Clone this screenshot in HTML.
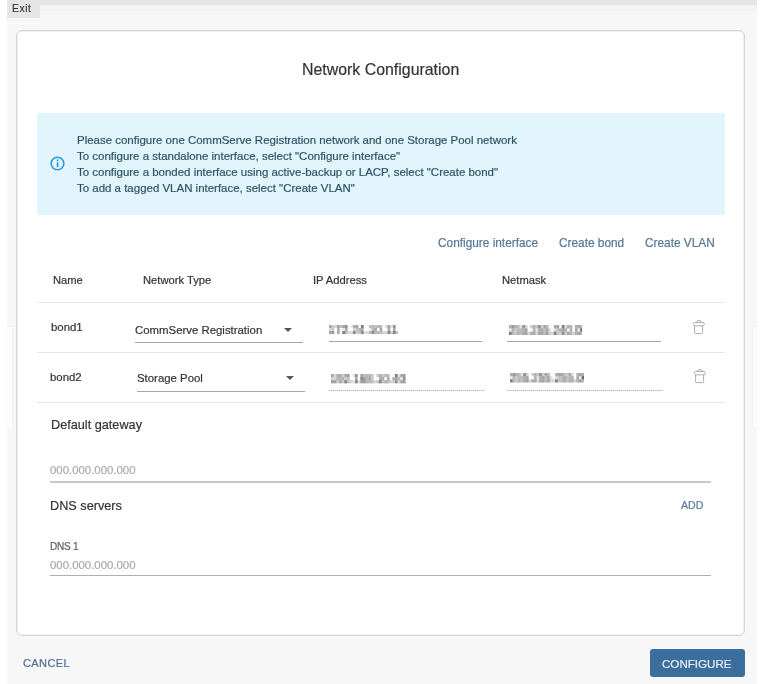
<!DOCTYPE html>
<html><head><meta charset="utf-8">
<style>
html,body{margin:0;padding:0;width:765px;height:684px;overflow:hidden;background:#fff;font-family:"Liberation Sans",sans-serif;}
.a{position:absolute;white-space:nowrap;will-change:transform;-webkit-text-stroke-width:0.2px;}
.b{position:absolute;}
#panel{left:7px;top:0;width:750px;height:684px;background:#f7f7f7;}
#band{left:7px;top:5px;width:750px;height:6px;background:#f3f3f3;}
#topbar{left:7px;top:0;width:750px;height:5px;background:#e6e6e6;}
#exit{left:7px;top:0;width:33px;height:18px;background:#e6e6e6;}
#exittxt{left:11.6px;top:3.1px;font-size:10.3px;color:#333;letter-spacing:0.6px;-webkit-text-stroke:0.15px #333;}
#card{left:16px;top:30px;width:727px;height:604px;background:#fff;border:1px solid #d6d6d6;border-radius:6px;box-shadow:inset 0 0 0 1px #f0f0f0;}
#title{left:302px;top:60.6px;font-size:15.9px;color:#333;}
#info{left:37px;top:113px;width:688px;height:102px;background:#e2f4fc;border-radius:2px;}
.itxt{font-size:11.47px;color:#2d5566;left:77px;}
.link{font-size:11.85px;color:#557797;top:235.6px;}
.hd{font-size:11.2px;color:#333;top:274px;}
.sep{left:37px;width:688px;height:1px;background:#e6e6e6;}
.cell{font-size:11.4px;color:#333;}
.ul{height:1px;background:#a8a8a8;}
.dul{height:1px;background:repeating-linear-gradient(90deg,#b8b8b8 0 1px,#e0e0e0 1px 2px);}
.sec{font-size:12.7px;color:#333;}
.ph{font-size:11.4px;color:#aaa;}
.inul{left:50px;width:661px;height:2px;background:#c8c8c8;}
.blur{color:#777;filter:blur(0.7px);}
</style></head><body>
<div class="b" id="panel"></div>
<div class="b" id="band"></div>
<div class="b" id="topbar"></div>
<div class="b" id="exit"></div>
<div class="a" id="exittxt">Exit</div>
<div class="b" style="left:6px;top:325.5px;width:6px;height:101px;background:#fcfcfc;border:1px solid #f2f2f2;border-left:none"></div>
<div class="b" style="left:751.5px;top:326px;width:6px;height:101px;background:#fcfcfc;border:1px solid #f2f2f2;border-right:none"></div>
<div class="b" id="card"></div>
<div class="a" id="title">Network Configuration</div>
<div class="b" id="info"></div>
<svg class="b" style="left:50px;top:156.3px" width="15" height="15" viewBox="0 0 15 15"><circle cx="7.5" cy="7.5" r="6.3" fill="none" stroke="#2799dc" stroke-width="1.6"/><rect x="6.75" y="6.3" width="1.6" height="4.8" fill="#2a8fd0"/><rect x="6.75" y="3.5" width="1.6" height="1.6" fill="#2a8fd0"/></svg>
<div class="a itxt" style="top:134.3px">Please configure one CommServe Registration network and one Storage Pool network</div>
<div class="a itxt" style="top:150.3px">To configure a standalone interface, select "Configure interface"</div>
<div class="a itxt" style="top:166.3px">To configure a bonded interface using active-backup or LACP, select "Create bond"</div>
<div class="a itxt" style="top:182.3px">To add a tagged VLAN interface, select "Create VLAN"</div>

<div class="a link" style="left:438px">Configure interface</div>
<div class="a link" style="left:559px">Create bond</div>
<div class="a link" style="left:645px">Create VLAN</div>

<div class="a hd" style="left:53px">Name</div>
<div class="a hd" style="left:143px">Network Type</div>
<div class="a hd" style="left:313px">IP Address</div>
<div class="a hd" style="left:502px">Netmask</div>
<div class="b sep" style="top:302px"></div>

<div class="a cell" style="left:51px;top:320.8px">bond1</div>
<div class="a cell" style="left:135px;top:323.7px">CommServe Registration</div>
<svg class="b" style="left:284px;top:327.5px" width="8" height="4" viewBox="0 0 8 4"><path d="M0 0H8L4 4Z" fill="#555"/></svg>
<div class="b ul" style="left:135px;top:342px;width:168px"></div>
<svg class="b" style="left:329px;top:325.2px;filter:blur(0.45px)" width="69" height="10"><rect x="0.00" y="0.00" width="2.71" height="3.06" fill="#666" fill-opacity="0.58"/><rect x="2.66" y="0.00" width="2.71" height="3.06" fill="#666" fill-opacity="0.32"/><rect x="5.33" y="0.00" width="2.71" height="3.06" fill="#666" fill-opacity="0.26"/><rect x="7.99" y="0.00" width="2.71" height="3.06" fill="#666" fill-opacity="0.58"/><rect x="10.65" y="0.00" width="2.71" height="3.06" fill="#666" fill-opacity="0.41"/><rect x="13.32" y="0.00" width="2.71" height="3.06" fill="#666" fill-opacity="0.58"/><rect x="15.98" y="0.00" width="2.71" height="3.06" fill="#666" fill-opacity="0.69"/><rect x="21.31" y="0.00" width="2.71" height="3.06" fill="#666" fill-opacity="0.14"/><rect x="23.97" y="0.00" width="2.71" height="3.06" fill="#666" fill-opacity="0.54"/><rect x="26.64" y="0.00" width="2.71" height="3.06" fill="#666" fill-opacity="0.60"/><rect x="31.96" y="0.00" width="2.71" height="3.06" fill="#666" fill-opacity="0.86"/><rect x="39.95" y="0.00" width="2.71" height="3.06" fill="#666" fill-opacity="0.44"/><rect x="42.62" y="0.00" width="2.71" height="3.06" fill="#666" fill-opacity="0.44"/><rect x="45.28" y="0.00" width="2.71" height="3.06" fill="#666" fill-opacity="0.39"/><rect x="47.95" y="0.00" width="2.71" height="3.06" fill="#666" fill-opacity="0.48"/><rect x="50.61" y="0.00" width="2.71" height="3.06" fill="#666" fill-opacity="0.42"/><rect x="55.94" y="0.00" width="2.71" height="3.06" fill="#666" fill-opacity="0.25"/><rect x="58.60" y="0.00" width="2.71" height="3.06" fill="#666" fill-opacity="0.61"/><rect x="61.26" y="0.00" width="2.71" height="3.06" fill="#666" fill-opacity="0.16"/><rect x="63.93" y="0.00" width="2.71" height="3.06" fill="#666" fill-opacity="0.70"/><rect x="0.00" y="3.01" width="2.71" height="3.06" fill="#666" fill-opacity="0.24"/><rect x="2.66" y="3.01" width="2.71" height="3.06" fill="#666" fill-opacity="0.33"/><rect x="7.99" y="3.01" width="2.71" height="3.06" fill="#666" fill-opacity="0.53"/><rect x="13.32" y="3.01" width="2.71" height="3.06" fill="#666" fill-opacity="0.12"/><rect x="15.98" y="3.01" width="2.71" height="3.06" fill="#666" fill-opacity="0.54"/><rect x="23.97" y="3.01" width="2.71" height="3.06" fill="#666" fill-opacity="0.28"/><rect x="26.64" y="3.01" width="2.71" height="3.06" fill="#666" fill-opacity="0.39"/><rect x="29.30" y="3.01" width="2.71" height="3.06" fill="#666" fill-opacity="0.48"/><rect x="31.96" y="3.01" width="2.71" height="3.06" fill="#666" fill-opacity="0.56"/><rect x="39.95" y="3.01" width="2.71" height="3.06" fill="#666" fill-opacity="0.10"/><rect x="42.62" y="3.01" width="2.71" height="3.06" fill="#666" fill-opacity="0.46"/><rect x="45.28" y="3.01" width="2.71" height="3.06" fill="#666" fill-opacity="0.56"/><rect x="50.61" y="3.01" width="2.71" height="3.06" fill="#666" fill-opacity="0.56"/><rect x="58.60" y="3.01" width="2.71" height="3.06" fill="#666" fill-opacity="0.55"/><rect x="63.93" y="3.01" width="2.71" height="3.06" fill="#666" fill-opacity="0.55"/><rect x="0.00" y="6.02" width="2.71" height="3.06" fill="#666" fill-opacity="0.58"/><rect x="2.66" y="6.02" width="2.71" height="3.06" fill="#666" fill-opacity="0.64"/><rect x="7.99" y="6.02" width="2.71" height="3.06" fill="#666" fill-opacity="0.54"/><rect x="13.32" y="6.02" width="2.71" height="3.06" fill="#666" fill-opacity="0.85"/><rect x="15.98" y="6.02" width="2.71" height="3.06" fill="#666" fill-opacity="0.43"/><rect x="18.65" y="6.02" width="2.71" height="3.06" fill="#666" fill-opacity="0.23"/><rect x="21.31" y="6.02" width="2.71" height="3.06" fill="#666" fill-opacity="0.25"/><rect x="23.97" y="6.02" width="2.71" height="3.06" fill="#666" fill-opacity="0.75"/><rect x="26.64" y="6.02" width="2.71" height="3.06" fill="#666" fill-opacity="0.33"/><rect x="29.30" y="6.02" width="2.71" height="3.06" fill="#666" fill-opacity="0.38"/><rect x="31.96" y="6.02" width="2.71" height="3.06" fill="#666" fill-opacity="0.75"/><rect x="34.63" y="6.02" width="2.71" height="3.06" fill="#666" fill-opacity="0.18"/><rect x="37.29" y="6.02" width="2.71" height="3.06" fill="#666" fill-opacity="0.22"/><rect x="39.95" y="6.02" width="2.71" height="3.06" fill="#666" fill-opacity="0.44"/><rect x="42.62" y="6.02" width="2.71" height="3.06" fill="#666" fill-opacity="0.73"/><rect x="45.28" y="6.02" width="2.71" height="3.06" fill="#666" fill-opacity="0.42"/><rect x="47.95" y="6.02" width="2.71" height="3.06" fill="#666" fill-opacity="0.47"/><rect x="50.61" y="6.02" width="2.71" height="3.06" fill="#666" fill-opacity="0.42"/><rect x="53.27" y="6.02" width="2.71" height="3.06" fill="#666" fill-opacity="0.27"/><rect x="55.94" y="6.02" width="2.71" height="3.06" fill="#666" fill-opacity="0.26"/><rect x="58.60" y="6.02" width="2.71" height="3.06" fill="#666" fill-opacity="0.79"/><rect x="61.26" y="6.02" width="2.71" height="3.06" fill="#666" fill-opacity="0.32"/><rect x="63.93" y="6.02" width="2.71" height="3.06" fill="#666" fill-opacity="0.79"/><rect x="66.59" y="6.02" width="2.71" height="3.06" fill="#666" fill-opacity="0.41"/></svg>
<div class="b ul" style="left:329px;top:341px;width:153px"></div>
<svg class="b" style="left:509px;top:324.6px;filter:blur(0.45px)" width="73" height="10.5"><rect x="0.00" y="0.00" width="2.69" height="3.37" fill="#666" fill-opacity="0.52"/><rect x="2.64" y="0.00" width="2.69" height="3.37" fill="#666" fill-opacity="0.68"/><rect x="5.27" y="0.00" width="2.69" height="3.37" fill="#666" fill-opacity="0.51"/><rect x="7.91" y="0.00" width="2.69" height="3.37" fill="#666" fill-opacity="0.43"/><rect x="10.55" y="0.00" width="2.69" height="3.37" fill="#666" fill-opacity="0.19"/><rect x="13.18" y="0.00" width="2.69" height="3.37" fill="#666" fill-opacity="0.71"/><rect x="15.82" y="0.00" width="2.69" height="3.37" fill="#666" fill-opacity="0.30"/><rect x="21.09" y="0.00" width="2.69" height="3.37" fill="#666" fill-opacity="0.32"/><rect x="23.73" y="0.00" width="2.69" height="3.37" fill="#666" fill-opacity="0.50"/><rect x="26.37" y="0.00" width="2.69" height="3.37" fill="#666" fill-opacity="0.39"/><rect x="29.00" y="0.00" width="2.69" height="3.37" fill="#666" fill-opacity="0.74"/><rect x="31.64" y="0.00" width="2.69" height="3.37" fill="#666" fill-opacity="0.30"/><rect x="34.28" y="0.00" width="2.69" height="3.37" fill="#666" fill-opacity="0.59"/><rect x="36.91" y="0.00" width="2.69" height="3.37" fill="#666" fill-opacity="0.43"/><rect x="39.55" y="0.00" width="2.69" height="3.37" fill="#666" fill-opacity="0.04"/><rect x="44.82" y="0.00" width="2.69" height="3.37" fill="#666" fill-opacity="0.54"/><rect x="47.46" y="0.00" width="2.69" height="3.37" fill="#666" fill-opacity="0.60"/><rect x="50.10" y="0.00" width="2.69" height="3.37" fill="#666" fill-opacity="0.03"/><rect x="52.73" y="0.00" width="2.69" height="3.37" fill="#666" fill-opacity="0.86"/><rect x="55.37" y="0.00" width="2.69" height="3.37" fill="#666" fill-opacity="0.23"/><rect x="58.01" y="0.00" width="2.69" height="3.37" fill="#666" fill-opacity="0.53"/><rect x="60.64" y="0.00" width="2.69" height="3.37" fill="#666" fill-opacity="0.47"/><rect x="65.92" y="0.00" width="2.69" height="3.37" fill="#666" fill-opacity="0.52"/><rect x="68.55" y="0.00" width="2.69" height="3.37" fill="#666" fill-opacity="0.56"/><rect x="71.19" y="0.00" width="2.69" height="3.37" fill="#666" fill-opacity="0.54"/><rect x="0.00" y="3.32" width="2.69" height="3.37" fill="#666" fill-opacity="0.15"/><rect x="2.64" y="3.32" width="2.69" height="3.37" fill="#666" fill-opacity="0.49"/><rect x="5.27" y="3.32" width="2.69" height="3.37" fill="#666" fill-opacity="0.33"/><rect x="7.91" y="3.32" width="2.69" height="3.37" fill="#666" fill-opacity="0.46"/><rect x="10.55" y="3.32" width="2.69" height="3.37" fill="#666" fill-opacity="0.45"/><rect x="13.18" y="3.32" width="2.69" height="3.37" fill="#666" fill-opacity="0.50"/><rect x="15.82" y="3.32" width="2.69" height="3.37" fill="#666" fill-opacity="0.59"/><rect x="23.73" y="3.32" width="2.69" height="3.37" fill="#666" fill-opacity="0.50"/><rect x="26.37" y="3.32" width="2.69" height="3.37" fill="#666" fill-opacity="0.18"/><rect x="29.00" y="3.32" width="2.69" height="3.37" fill="#666" fill-opacity="0.52"/><rect x="31.64" y="3.32" width="2.69" height="3.37" fill="#666" fill-opacity="0.59"/><rect x="34.28" y="3.32" width="2.69" height="3.37" fill="#666" fill-opacity="0.41"/><rect x="36.91" y="3.32" width="2.69" height="3.37" fill="#666" fill-opacity="0.57"/><rect x="39.55" y="3.32" width="2.69" height="3.37" fill="#666" fill-opacity="0.19"/><rect x="44.82" y="3.32" width="2.69" height="3.37" fill="#666" fill-opacity="0.24"/><rect x="47.46" y="3.32" width="2.69" height="3.37" fill="#666" fill-opacity="0.39"/><rect x="50.10" y="3.32" width="2.69" height="3.37" fill="#666" fill-opacity="0.50"/><rect x="52.73" y="3.32" width="2.69" height="3.37" fill="#666" fill-opacity="0.60"/><rect x="55.37" y="3.32" width="2.69" height="3.37" fill="#666" fill-opacity="0.50"/><rect x="58.01" y="3.32" width="2.69" height="3.37" fill="#666" fill-opacity="0.05"/><rect x="60.64" y="3.32" width="2.69" height="3.37" fill="#666" fill-opacity="0.53"/><rect x="65.92" y="3.32" width="2.69" height="3.37" fill="#666" fill-opacity="0.56"/><rect x="68.55" y="3.32" width="2.69" height="3.37" fill="#666" fill-opacity="0.12"/><rect x="71.19" y="3.32" width="2.69" height="3.37" fill="#666" fill-opacity="1.00"/><rect x="0.00" y="6.65" width="2.69" height="3.37" fill="#666" fill-opacity="0.83"/><rect x="2.64" y="6.65" width="2.69" height="3.37" fill="#666" fill-opacity="0.47"/><rect x="5.27" y="6.65" width="2.69" height="3.37" fill="#666" fill-opacity="0.37"/><rect x="7.91" y="6.65" width="2.69" height="3.37" fill="#666" fill-opacity="0.51"/><rect x="10.55" y="6.65" width="2.69" height="3.37" fill="#666" fill-opacity="0.44"/><rect x="13.18" y="6.65" width="2.69" height="3.37" fill="#666" fill-opacity="0.57"/><rect x="15.82" y="6.65" width="2.69" height="3.37" fill="#666" fill-opacity="0.60"/><rect x="18.46" y="6.65" width="2.69" height="3.37" fill="#666" fill-opacity="0.29"/><rect x="21.09" y="6.65" width="2.69" height="3.37" fill="#666" fill-opacity="0.52"/><rect x="23.73" y="6.65" width="2.69" height="3.37" fill="#666" fill-opacity="0.56"/><rect x="26.37" y="6.65" width="2.69" height="3.37" fill="#666" fill-opacity="0.26"/><rect x="29.00" y="6.65" width="2.69" height="3.37" fill="#666" fill-opacity="0.57"/><rect x="31.64" y="6.65" width="2.69" height="3.37" fill="#666" fill-opacity="0.60"/><rect x="34.28" y="6.65" width="2.69" height="3.37" fill="#666" fill-opacity="0.45"/><rect x="36.91" y="6.65" width="2.69" height="3.37" fill="#666" fill-opacity="0.61"/><rect x="39.55" y="6.65" width="2.69" height="3.37" fill="#666" fill-opacity="0.27"/><rect x="42.19" y="6.65" width="2.69" height="3.37" fill="#666" fill-opacity="0.26"/><rect x="44.82" y="6.65" width="2.69" height="3.37" fill="#666" fill-opacity="0.82"/><rect x="47.46" y="6.65" width="2.69" height="3.37" fill="#666" fill-opacity="0.39"/><rect x="50.10" y="6.65" width="2.69" height="3.37" fill="#666" fill-opacity="0.31"/><rect x="52.73" y="6.65" width="2.69" height="3.37" fill="#666" fill-opacity="0.73"/><rect x="55.37" y="6.65" width="2.69" height="3.37" fill="#666" fill-opacity="0.33"/><rect x="58.01" y="6.65" width="2.69" height="3.37" fill="#666" fill-opacity="0.58"/><rect x="60.64" y="6.65" width="2.69" height="3.37" fill="#666" fill-opacity="0.46"/><rect x="63.28" y="6.65" width="2.69" height="3.37" fill="#666" fill-opacity="0.29"/><rect x="65.92" y="6.65" width="2.69" height="3.37" fill="#666" fill-opacity="0.51"/><rect x="68.55" y="6.65" width="2.69" height="3.37" fill="#666" fill-opacity="0.60"/><rect x="71.19" y="6.65" width="2.69" height="3.37" fill="#666" fill-opacity="0.45"/></svg>
<div class="b ul" style="left:507px;top:340.5px;width:154px"></div>
<svg class="b" style="left:692px;top:319px" width="14" height="16" viewBox="0 0 14 16"><g fill="none" stroke="#aaa" stroke-width="0.95"><rect x="1.6" y="3.5" width="10.6" height="3.3" rx="1"/><path d="M2.6 6.8V13.8a.8 .8 0 0 0 .8 .8H9.8a.8 .8 0 0 0 .8-.8V6.8"/><path d="M4.6 3.5a2.4 2.1 0 0 1 4.8 0"/></g></svg>
<div class="b sep" style="top:352px"></div>

<div class="a cell" style="left:50px;top:370.8px">bond2</div>
<div class="a cell" style="left:137px;top:372.4px">Storage Pool</div>
<svg class="b" style="left:286px;top:376px" width="8" height="4" viewBox="0 0 8 4"><path d="M0 0H8L4 4Z" fill="#555"/></svg>
<div class="b ul" style="left:137px;top:390.5px;width:168px"></div>
<svg class="b" style="left:331px;top:373.6px;filter:blur(0.45px)" width="75" height="10"><rect x="0.00" y="0.00" width="2.71" height="3.15" fill="#666" fill-opacity="0.60"/><rect x="2.66" y="0.00" width="2.71" height="3.15" fill="#666" fill-opacity="0.27"/><rect x="5.33" y="0.00" width="2.71" height="3.15" fill="#666" fill-opacity="0.51"/><rect x="7.99" y="0.00" width="2.71" height="3.15" fill="#666" fill-opacity="0.54"/><rect x="10.65" y="0.00" width="2.71" height="3.15" fill="#666" fill-opacity="0.32"/><rect x="13.31" y="0.00" width="2.71" height="3.15" fill="#666" fill-opacity="0.55"/><rect x="15.98" y="0.00" width="2.71" height="3.15" fill="#666" fill-opacity="0.61"/><rect x="21.30" y="0.00" width="2.71" height="3.15" fill="#666" fill-opacity="0.14"/><rect x="23.97" y="0.00" width="2.71" height="3.15" fill="#666" fill-opacity="0.70"/><rect x="29.29" y="0.00" width="2.71" height="3.15" fill="#666" fill-opacity="0.59"/><rect x="31.96" y="0.00" width="2.71" height="3.15" fill="#666" fill-opacity="0.44"/><rect x="34.62" y="0.00" width="2.71" height="3.15" fill="#666" fill-opacity="0.48"/><rect x="37.28" y="0.00" width="2.71" height="3.15" fill="#666" fill-opacity="0.47"/><rect x="39.94" y="0.00" width="2.71" height="3.15" fill="#666" fill-opacity="0.36"/><rect x="45.27" y="0.00" width="2.71" height="3.15" fill="#666" fill-opacity="0.32"/><rect x="47.93" y="0.00" width="2.71" height="3.15" fill="#666" fill-opacity="0.52"/><rect x="50.60" y="0.00" width="2.71" height="3.15" fill="#666" fill-opacity="0.36"/><rect x="53.26" y="0.00" width="2.71" height="3.15" fill="#666" fill-opacity="0.47"/><rect x="55.92" y="0.00" width="2.71" height="3.15" fill="#666" fill-opacity="0.45"/><rect x="63.91" y="0.00" width="2.71" height="3.15" fill="#666" fill-opacity="0.85"/><rect x="66.57" y="0.00" width="2.71" height="3.15" fill="#666" fill-opacity="0.18"/><rect x="69.24" y="0.00" width="2.71" height="3.15" fill="#666" fill-opacity="0.57"/><rect x="71.90" y="0.00" width="2.71" height="3.15" fill="#666" fill-opacity="0.64"/><rect x="0.00" y="3.10" width="2.71" height="3.15" fill="#666" fill-opacity="0.27"/><rect x="2.66" y="3.10" width="2.71" height="3.15" fill="#666" fill-opacity="0.28"/><rect x="5.33" y="3.10" width="2.71" height="3.15" fill="#666" fill-opacity="0.49"/><rect x="7.99" y="3.10" width="2.71" height="3.15" fill="#666" fill-opacity="0.46"/><rect x="10.65" y="3.10" width="2.71" height="3.15" fill="#666" fill-opacity="0.50"/><rect x="13.31" y="3.10" width="2.71" height="3.15" fill="#666" fill-opacity="0.26"/><rect x="15.98" y="3.10" width="2.71" height="3.15" fill="#666" fill-opacity="0.40"/><rect x="23.97" y="3.10" width="2.71" height="3.15" fill="#666" fill-opacity="0.54"/><rect x="29.29" y="3.10" width="2.71" height="3.15" fill="#666" fill-opacity="0.79"/><rect x="31.96" y="3.10" width="2.71" height="3.15" fill="#666" fill-opacity="0.65"/><rect x="34.62" y="3.10" width="2.71" height="3.15" fill="#666" fill-opacity="0.48"/><rect x="37.28" y="3.10" width="2.71" height="3.15" fill="#666" fill-opacity="0.55"/><rect x="39.94" y="3.10" width="2.71" height="3.15" fill="#666" fill-opacity="0.34"/><rect x="47.93" y="3.10" width="2.71" height="3.15" fill="#666" fill-opacity="0.54"/><rect x="50.60" y="3.10" width="2.71" height="3.15" fill="#666" fill-opacity="0.54"/><rect x="55.92" y="3.10" width="2.71" height="3.15" fill="#666" fill-opacity="0.55"/><rect x="61.25" y="3.10" width="2.71" height="3.15" fill="#666" fill-opacity="0.50"/><rect x="63.91" y="3.10" width="2.71" height="3.15" fill="#666" fill-opacity="0.59"/><rect x="66.57" y="3.10" width="2.71" height="3.15" fill="#666" fill-opacity="0.45"/><rect x="69.24" y="3.10" width="2.71" height="3.15" fill="#666" fill-opacity="0.13"/><rect x="71.90" y="3.10" width="2.71" height="3.15" fill="#666" fill-opacity="0.67"/><rect x="0.00" y="6.20" width="2.71" height="3.15" fill="#666" fill-opacity="0.63"/><rect x="2.66" y="6.20" width="2.71" height="3.15" fill="#666" fill-opacity="0.61"/><rect x="5.33" y="6.20" width="2.71" height="3.15" fill="#666" fill-opacity="0.32"/><rect x="7.99" y="6.20" width="2.71" height="3.15" fill="#666" fill-opacity="0.56"/><rect x="10.65" y="6.20" width="2.71" height="3.15" fill="#666" fill-opacity="0.33"/><rect x="13.31" y="6.20" width="2.71" height="3.15" fill="#666" fill-opacity="0.81"/><rect x="15.98" y="6.20" width="2.71" height="3.15" fill="#666" fill-opacity="0.38"/><rect x="18.64" y="6.20" width="2.71" height="3.15" fill="#666" fill-opacity="0.28"/><rect x="21.30" y="6.20" width="2.71" height="3.15" fill="#666" fill-opacity="0.17"/><rect x="23.97" y="6.20" width="2.71" height="3.15" fill="#666" fill-opacity="0.80"/><rect x="26.63" y="6.20" width="2.71" height="3.15" fill="#666" fill-opacity="0.24"/><rect x="29.29" y="6.20" width="2.71" height="3.15" fill="#666" fill-opacity="0.62"/><rect x="31.96" y="6.20" width="2.71" height="3.15" fill="#666" fill-opacity="0.66"/><rect x="34.62" y="6.20" width="2.71" height="3.15" fill="#666" fill-opacity="0.50"/><rect x="37.28" y="6.20" width="2.71" height="3.15" fill="#666" fill-opacity="0.45"/><rect x="39.94" y="6.20" width="2.71" height="3.15" fill="#666" fill-opacity="0.42"/><rect x="42.61" y="6.20" width="2.71" height="3.15" fill="#666" fill-opacity="0.28"/><rect x="45.27" y="6.20" width="2.71" height="3.15" fill="#666" fill-opacity="0.35"/><rect x="47.93" y="6.20" width="2.71" height="3.15" fill="#666" fill-opacity="0.80"/><rect x="50.60" y="6.20" width="2.71" height="3.15" fill="#666" fill-opacity="0.40"/><rect x="53.26" y="6.20" width="2.71" height="3.15" fill="#666" fill-opacity="0.50"/><rect x="55.92" y="6.20" width="2.71" height="3.15" fill="#666" fill-opacity="0.44"/><rect x="58.59" y="6.20" width="2.71" height="3.15" fill="#666" fill-opacity="0.28"/><rect x="61.25" y="6.20" width="2.71" height="3.15" fill="#666" fill-opacity="0.31"/><rect x="63.91" y="6.20" width="2.71" height="3.15" fill="#666" fill-opacity="0.71"/><rect x="66.57" y="6.20" width="2.71" height="3.15" fill="#666" fill-opacity="0.29"/><rect x="69.24" y="6.20" width="2.71" height="3.15" fill="#666" fill-opacity="0.59"/><rect x="71.90" y="6.20" width="2.71" height="3.15" fill="#666" fill-opacity="0.63"/></svg>
<div class="b dul" style="left:329px;top:389.5px;width:155px"></div>
<svg class="b" style="left:510px;top:373px;filter:blur(0.45px)" width="73.5" height="10"><rect x="0.00" y="0.00" width="2.70" height="3.20" fill="#666" fill-opacity="0.52"/><rect x="2.65" y="0.00" width="2.70" height="3.20" fill="#666" fill-opacity="0.68"/><rect x="5.31" y="0.00" width="2.70" height="3.20" fill="#666" fill-opacity="0.51"/><rect x="7.96" y="0.00" width="2.70" height="3.20" fill="#666" fill-opacity="0.43"/><rect x="10.62" y="0.00" width="2.70" height="3.20" fill="#666" fill-opacity="0.19"/><rect x="13.27" y="0.00" width="2.70" height="3.20" fill="#666" fill-opacity="0.71"/><rect x="15.93" y="0.00" width="2.70" height="3.20" fill="#666" fill-opacity="0.30"/><rect x="21.24" y="0.00" width="2.70" height="3.20" fill="#666" fill-opacity="0.32"/><rect x="23.89" y="0.00" width="2.70" height="3.20" fill="#666" fill-opacity="0.50"/><rect x="26.55" y="0.00" width="2.70" height="3.20" fill="#666" fill-opacity="0.39"/><rect x="29.20" y="0.00" width="2.70" height="3.20" fill="#666" fill-opacity="0.74"/><rect x="31.86" y="0.00" width="2.70" height="3.20" fill="#666" fill-opacity="0.30"/><rect x="34.51" y="0.00" width="2.70" height="3.20" fill="#666" fill-opacity="0.59"/><rect x="37.17" y="0.00" width="2.70" height="3.20" fill="#666" fill-opacity="0.43"/><rect x="39.82" y="0.00" width="2.70" height="3.20" fill="#666" fill-opacity="0.04"/><rect x="45.13" y="0.00" width="2.70" height="3.20" fill="#666" fill-opacity="0.54"/><rect x="47.79" y="0.00" width="2.70" height="3.20" fill="#666" fill-opacity="0.60"/><rect x="50.44" y="0.00" width="2.70" height="3.20" fill="#666" fill-opacity="0.59"/><rect x="53.10" y="0.00" width="2.70" height="3.20" fill="#666" fill-opacity="0.43"/><rect x="55.75" y="0.00" width="2.70" height="3.20" fill="#666" fill-opacity="0.32"/><rect x="58.41" y="0.00" width="2.70" height="3.20" fill="#666" fill-opacity="0.57"/><rect x="61.06" y="0.00" width="2.70" height="3.20" fill="#666" fill-opacity="0.22"/><rect x="66.37" y="0.00" width="2.70" height="3.20" fill="#666" fill-opacity="0.52"/><rect x="69.03" y="0.00" width="2.70" height="3.20" fill="#666" fill-opacity="0.56"/><rect x="71.68" y="0.00" width="2.70" height="3.20" fill="#666" fill-opacity="0.54"/><rect x="0.00" y="3.15" width="2.70" height="3.20" fill="#666" fill-opacity="0.15"/><rect x="2.65" y="3.15" width="2.70" height="3.20" fill="#666" fill-opacity="0.49"/><rect x="5.31" y="3.15" width="2.70" height="3.20" fill="#666" fill-opacity="0.33"/><rect x="7.96" y="3.15" width="2.70" height="3.20" fill="#666" fill-opacity="0.46"/><rect x="10.62" y="3.15" width="2.70" height="3.20" fill="#666" fill-opacity="0.45"/><rect x="13.27" y="3.15" width="2.70" height="3.20" fill="#666" fill-opacity="0.50"/><rect x="15.93" y="3.15" width="2.70" height="3.20" fill="#666" fill-opacity="0.59"/><rect x="23.89" y="3.15" width="2.70" height="3.20" fill="#666" fill-opacity="0.50"/><rect x="26.55" y="3.15" width="2.70" height="3.20" fill="#666" fill-opacity="0.18"/><rect x="29.20" y="3.15" width="2.70" height="3.20" fill="#666" fill-opacity="0.52"/><rect x="31.86" y="3.15" width="2.70" height="3.20" fill="#666" fill-opacity="0.59"/><rect x="34.51" y="3.15" width="2.70" height="3.20" fill="#666" fill-opacity="0.41"/><rect x="37.17" y="3.15" width="2.70" height="3.20" fill="#666" fill-opacity="0.57"/><rect x="39.82" y="3.15" width="2.70" height="3.20" fill="#666" fill-opacity="0.19"/><rect x="45.13" y="3.15" width="2.70" height="3.20" fill="#666" fill-opacity="0.24"/><rect x="47.79" y="3.15" width="2.70" height="3.20" fill="#666" fill-opacity="0.39"/><rect x="50.44" y="3.15" width="2.70" height="3.20" fill="#666" fill-opacity="0.41"/><rect x="53.10" y="3.15" width="2.70" height="3.20" fill="#666" fill-opacity="0.55"/><rect x="55.75" y="3.15" width="2.70" height="3.20" fill="#666" fill-opacity="0.42"/><rect x="58.41" y="3.15" width="2.70" height="3.20" fill="#666" fill-opacity="0.46"/><rect x="61.06" y="3.15" width="2.70" height="3.20" fill="#666" fill-opacity="0.51"/><rect x="66.37" y="3.15" width="2.70" height="3.20" fill="#666" fill-opacity="0.56"/><rect x="69.03" y="3.15" width="2.70" height="3.20" fill="#666" fill-opacity="0.12"/><rect x="71.68" y="3.15" width="2.70" height="3.20" fill="#666" fill-opacity="1.00"/><rect x="0.00" y="6.30" width="2.70" height="3.20" fill="#666" fill-opacity="0.83"/><rect x="2.65" y="6.30" width="2.70" height="3.20" fill="#666" fill-opacity="0.47"/><rect x="5.31" y="6.30" width="2.70" height="3.20" fill="#666" fill-opacity="0.37"/><rect x="7.96" y="6.30" width="2.70" height="3.20" fill="#666" fill-opacity="0.51"/><rect x="10.62" y="6.30" width="2.70" height="3.20" fill="#666" fill-opacity="0.44"/><rect x="13.27" y="6.30" width="2.70" height="3.20" fill="#666" fill-opacity="0.57"/><rect x="15.93" y="6.30" width="2.70" height="3.20" fill="#666" fill-opacity="0.60"/><rect x="18.58" y="6.30" width="2.70" height="3.20" fill="#666" fill-opacity="0.29"/><rect x="21.24" y="6.30" width="2.70" height="3.20" fill="#666" fill-opacity="0.52"/><rect x="23.89" y="6.30" width="2.70" height="3.20" fill="#666" fill-opacity="0.56"/><rect x="26.55" y="6.30" width="2.70" height="3.20" fill="#666" fill-opacity="0.26"/><rect x="29.20" y="6.30" width="2.70" height="3.20" fill="#666" fill-opacity="0.57"/><rect x="31.86" y="6.30" width="2.70" height="3.20" fill="#666" fill-opacity="0.60"/><rect x="34.51" y="6.30" width="2.70" height="3.20" fill="#666" fill-opacity="0.45"/><rect x="37.17" y="6.30" width="2.70" height="3.20" fill="#666" fill-opacity="0.61"/><rect x="39.82" y="6.30" width="2.70" height="3.20" fill="#666" fill-opacity="0.27"/><rect x="42.48" y="6.30" width="2.70" height="3.20" fill="#666" fill-opacity="0.26"/><rect x="45.13" y="6.30" width="2.70" height="3.20" fill="#666" fill-opacity="0.82"/><rect x="47.79" y="6.30" width="2.70" height="3.20" fill="#666" fill-opacity="0.39"/><rect x="50.44" y="6.30" width="2.70" height="3.20" fill="#666" fill-opacity="0.45"/><rect x="53.10" y="6.30" width="2.70" height="3.20" fill="#666" fill-opacity="0.59"/><rect x="55.75" y="6.30" width="2.70" height="3.20" fill="#666" fill-opacity="0.40"/><rect x="58.41" y="6.30" width="2.70" height="3.20" fill="#666" fill-opacity="0.52"/><rect x="61.06" y="6.30" width="2.70" height="3.20" fill="#666" fill-opacity="0.51"/><rect x="63.72" y="6.30" width="2.70" height="3.20" fill="#666" fill-opacity="0.29"/><rect x="66.37" y="6.30" width="2.70" height="3.20" fill="#666" fill-opacity="0.51"/><rect x="69.03" y="6.30" width="2.70" height="3.20" fill="#666" fill-opacity="0.60"/><rect x="71.68" y="6.30" width="2.70" height="3.20" fill="#666" fill-opacity="0.45"/></svg>
<div class="b dul" style="left:507px;top:390px;width:156px"></div>
<svg class="b" style="left:692.5px;top:368px" width="14" height="16" viewBox="0 0 14 16"><g fill="none" stroke="#aaa" stroke-width="0.95"><rect x="1.6" y="3.5" width="10.6" height="3.3" rx="1"/><path d="M2.6 6.8V13.8a.8 .8 0 0 0 .8 .8H9.8a.8 .8 0 0 0 .8-.8V6.8"/><path d="M4.6 3.5a2.4 2.1 0 0 1 4.8 0"/></g></svg>
<div class="b sep" style="top:402px"></div>

<div class="a sec" style="left:51px;top:417.5px">Default gateway</div>
<div class="a ph" style="left:50px;top:463.5px">000.000.000.000</div>
<div class="b inul" style="top:481px"></div>

<div class="a sec" style="left:50px;top:498.5px">DNS servers</div>
<div class="a" style="left:681px;top:499px;font-size:10.6px;color:#58799a">ADD</div>
<div class="a" style="left:50px;top:541px;font-size:10px;letter-spacing:-0.2px;color:#606060">DNS 1</div>
<div class="a ph" style="left:50px;top:558.5px">000.000.000.000</div>
<div class="b inul" style="top:575px;height:1px;background:#b0b0b0"></div>

<div class="a" style="left:23.2px;top:657.2px;font-size:11px;letter-spacing:0.4px;color:#4a6f94;-webkit-text-stroke:0.2px #4a6f94">CANCEL</div>
<div class="b" style="left:650px;top:649px;width:95px;height:28px;background:#3b6e9c;border-radius:3px"></div>
<div class="a" style="left:662.4px;top:657.3px;font-size:11.6px;color:#e8eef5">CONFIGURE</div>
</body></html>
